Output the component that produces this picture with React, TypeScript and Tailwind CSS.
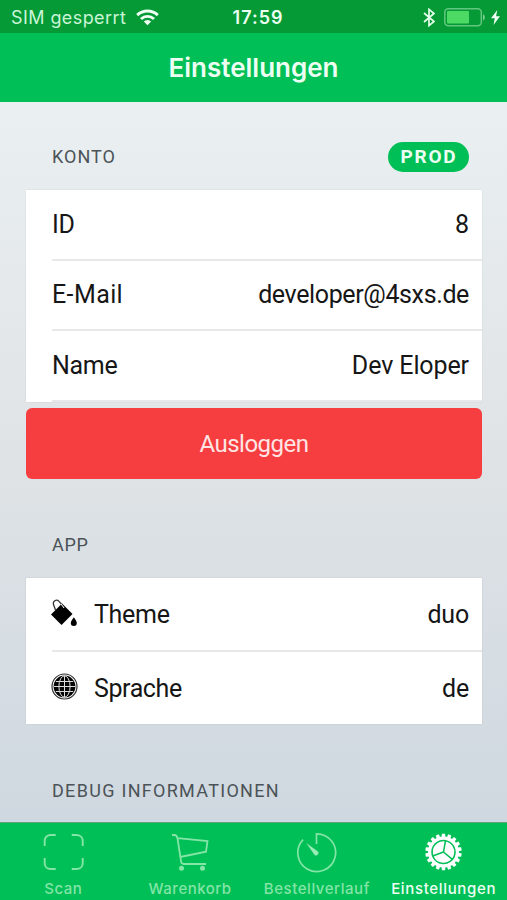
import type { ReactNode } from "react";

function StatusBar() {
  return (
    <div className="grid h-[33px] grid-cols-3 items-center bg-[#069a36] pr-[7px] pl-[11px] pt-[2px] font-['Inter',sans-serif] text-[#e9fff0]">
      <div className="flex items-center gap-[10px]">
        <span className="text-[18px] leading-6 tracking-[0.42px] whitespace-nowrap text-[#c9f5d6]">SIM gesperrt</span>
        <svg width="23" height="17" viewBox="0 0 23 17" className="shrink-0" fill="none" stroke="#effff4" strokeWidth="2.9">
          <path d="M1.2 6.1a14.8 14.8 0 0 1 20.6 0" />
          <path d="M5 10a9.3 9.3 0 0 1 13 0" />
          <path d="M11.5 16.2 7.8 12.5a5.3 5.3 0 0 1 7.4 0Z" fill="#effff4" stroke="none" />
        </svg>
      </div>
      <span className="pl-[5px] text-center text-[18px] leading-6 font-semibold tracking-[1px]">17:59</span>
      <div className="flex items-center justify-end">
        <svg width="12" height="19" viewBox="0 0 12 19" fill="none" stroke="#e4ffec" strokeWidth="1.7">
          <path d="M1 5 11 13.5 6 17.6V1.4L11 5.5 1 14" />
        </svg>
        <svg width="42" height="19" viewBox="0 0 42 19" className="ml-[9px]">
          <rect x="0.8" y="0.8" width="36.5" height="17" rx="3.5" fill="none" stroke="#61c77e" strokeWidth="1.5" />
          <rect x="3" y="3" width="22" height="12.5" rx="1" fill="#4cd964" />
          <path d="M39 6.2c2.4.6 2.4 5.6 0 6.2Z" fill="#78cf8e" />
        </svg>
        <svg width="9" height="15" viewBox="0 0 9 15" className="ml-[5px]">
          <path d="M6.3 0 0 8.3h3.8L2.5 15 9 6.3H5.1Z" fill="#effff4" />
        </svg>
      </div>
    </div>
  );
}

function SectionTitle({ children, spacing }: { children: ReactNode; spacing: string }) {
  return <h2 className={`text-[18px] leading-6 whitespace-nowrap text-[#4b5357] ${spacing}`}>{children}</h2>;
}

function Row({
  label,
  value,
  icon,
  height,
  labelSpacing,
  valueSpacing,
  last = false,
}: {
  label: string;
  value: string;
  icon?: ReactNode;
  height: string;
  labelSpacing: string;
  valueSpacing: string;
  last?: boolean;
}) {
  return (
    <div
      className={`ml-[26px] flex items-center pr-[13px] text-[25px] leading-8 text-[#161616] ${height} ${last ? "" : "border-b-2 border-[#e6e8e9]"}`}
    >
      {icon && <span className="mb-1 -ml-px w-[43px] shrink-0">{icon}</span>}
      <span className={labelSpacing}>{label}</span>
      <span className={`ml-auto ${valueSpacing}`}>{value}</span>
    </div>
  );
}

function PaintIcon() {
  return (
    <svg width="27" height="28" viewBox="0 0 27 28">
      <path d="M11 4.5 21.5 15 10.5 26 0 15.5Z" fill="#000" />
      <path d="M4.5 11 2.6 5.8C1.3 2.3 5.4-.4 8 2.4l5.5 6" fill="none" stroke="#333" strokeWidth="1.3" />
      <path d="M10 5 13 9" stroke="#fff" strokeWidth="1" />
      <path d="M22.8 18.2c1.8 2.6 3 4.1 3 5.8a3 3 0 0 1-6 0c0-1.7 1.3-3.2 3-5.8Z" fill="#000" />
    </svg>
  );
}

function GlobeIcon() {
  return (
    <svg width="27" height="27" viewBox="0 0 27 27" fill="none">
      <circle cx="13.5" cy="13.5" r="12.5" stroke="#333" strokeWidth="1.2" />
      <circle cx="13.5" cy="13.5" r="10.9" fill="#050505" />
      <g stroke="#ddd" strokeWidth="1">
        <path d="M13.5 3v21M3 13.5h21M4.800 8.500h17.400M4.800 18.500h17.400" />
        <ellipse cx="13.5" cy="13.5" rx="5.600" ry="10.700" />
      </g>
    </svg>
  );
}

function ScanIcon() {
  return (
    <svg width="42" height="42" viewBox="-0.7 0 42 42" fill="none" stroke="#83e5a6" strokeWidth="1.9">
      <path d="M2 14V8.500C2 5 4.800 3 8 3h5M29 3h4.500C37 3 40 5 40 8.500V14M2 26v5.500C2 35 4.800 37 8 37h5M29 37h4.500c3.500 0 6.500-2 6.500-5.500V26" />
    </svg>
  );
}

function CartIcon() {
  return (
    <svg width="42" height="42" viewBox="0 0 42 42" fill="none" stroke="#83e5a6" strokeWidth="1.8">
      <path d="M3 3h2.500c2.500 0 2.700 1.500 3.100 4l3.500 22.500c.2 1.800 1 2.500 2.500 2.500H37M8.500 6.200 38.500 9 37 19.700 11.200 25" />
      <circle cx="12.500" cy="36.300" r="2.500" fill="#83e5a6" stroke="none" />
      <circle cx="33.500" cy="36.300" r="2.500" fill="#83e5a6" stroke="none" />
    </svg>
  );
}

function TimerIcon() {
  return (
    <svg width="42" height="42" viewBox="1 0 42 42" fill="none" stroke="#83e5a6" strokeWidth="1.700">
      <path d="M21.500 12V1.800A18.900 18.900 0 1 1 8.100 7.600" />
      <path d="m11.300 10.900 11.600 8.700c1.800 2.400-1.200 5-3.300 3.300Z" fill="#9aecb7" stroke="none" />
    </svg>
  );
}

const teeth = Array.from({ length: 18 }, (_, i) => i * 20);

function GearIcon() {
  return (
    <svg width="42" height="42" viewBox="-20.500 -20 42 42" fill="#fff">
      {teeth.map((angle) => (
        <path key={angle} d="M-2-14-1.600-18.200h3.200L2-14Z" transform={`rotate(${angle})`} />
      ))}
      <circle r="15.500" />
      <g fill="none" stroke="#00bf56" strokeWidth="1.500" transform="rotate(10)">
        <circle r="11.500" />
        <path d="M0 0V-11.500M0 0 10 5.750M0 0-10 5.750" />
      </g>
    </svg>
  );
}

function Tab({ icon, label, spacing, active = false }: { icon: ReactNode; label: string; spacing: string; active?: boolean }) {
  return (
    <div className={`flex flex-col items-center pt-[9px] font-['Inter',sans-serif] ${active ? "text-[#edfff3]" : "text-[#83e5a6]"}`}>
      {icon}
      <span className={`mt-[5px] text-[15px] leading-5 font-medium whitespace-nowrap ${spacing}`}>{label}</span>
    </div>
  );
}

export default function App() {
  return (
    <div className="flex h-[900px] w-[507px] flex-col overflow-hidden bg-[#00bf56] font-['Roboto',sans-serif]">
      <StatusBar />
      <header className="flex h-[69px] items-center justify-center font-['Inter',sans-serif] text-[26px] font-semibold text-[#edfff3]">
        <h1>Einstellungen</h1>
      </header>

      <main className="h-[720px] bg-linear-to-b from-[#eaeff1] via-[#dfe3e6] to-[#cfd8e0] pr-[25px] pl-[26px]">
        <div className="flex h-[88px] items-center justify-between pt-[22px] pr-[13px] pl-[26px]">
          <SectionTitle spacing="tracking-[1px]">KONTO</SectionTitle>
          <span className="flex h-[30px] w-[81px] items-center justify-center rounded-full bg-[#00bf56] pl-[1px] text-[19px] font-bold tracking-[1.8px] text-[#edfff3]">
            PROD
          </span>
        </div>
        <section className="h-[212px] bg-white shadow-[0_0_1px_#bfc5c9]">
          <Row label="ID" value="8" height="h-[71px]" labelSpacing="tracking-[-0.2px]" valueSpacing="tracking-[0px]" />
          <Row label="E-Mail" value="developer@4sxs.de" height="h-[70px]" labelSpacing="tracking-[0.4px]" valueSpacing="tracking-[-0.37px]" />
          <Row label="Name" value="Dev Eloper" height="h-[71px]" labelSpacing="tracking-[-0.3px]" valueSpacing="tracking-[-0.1px]" />
        </section>
        <button className="mt-[6px] block h-[71px] w-full rounded-[6px] bg-[#f63d3f] text-[24px] text-[#ffe4e4]">
          <span className="tracking-[-0.5px]">Ausloggen</span>
        </button>

        <div className="flex h-[99px] items-center pt-[33px] pl-[26px]">
          <SectionTitle spacing="tracking-[0.7px]">APP</SectionTitle>
        </div>
        <section className="h-[146px] bg-white shadow-[0_0_1px_#aab1b5]">
          <Row icon={<PaintIcon />} label="Theme" value="duo" height="h-[74px] pt-[2px]" labelSpacing="tracking-[-0.3px]" valueSpacing="tracking-[-0.2px]" />
          <Row icon={<GlobeIcon />} label="Sprache" value="de" height="h-[72px] pt-[1px]" labelSpacing="tracking-[-0.4px]" valueSpacing="tracking-[-0.2px]" last />
        </section>
        <div className="pt-[55px] pl-[26px]">
          <SectionTitle spacing="tracking-[1.3px]">DEBUG INFORMATIONEN</SectionTitle>
        </div>
      </main>

      <nav className="grid h-[78px] grid-cols-4 border-t border-[#5fa37c] bg-[#00bf56]">
        <Tab icon={<ScanIcon />} label="Scan" spacing="tracking-[0.5px]" />
        <Tab icon={<CartIcon />} label="Warenkorb" spacing="tracking-[0.5px]" />
        <Tab icon={<TimerIcon />} label="Bestellverlauf" spacing="tracking-[0.55px]" />
        <Tab icon={<GearIcon />} label="Einstellungen" spacing="tracking-[0.65px]" active />
      </nav>
    </div>
  );
}
